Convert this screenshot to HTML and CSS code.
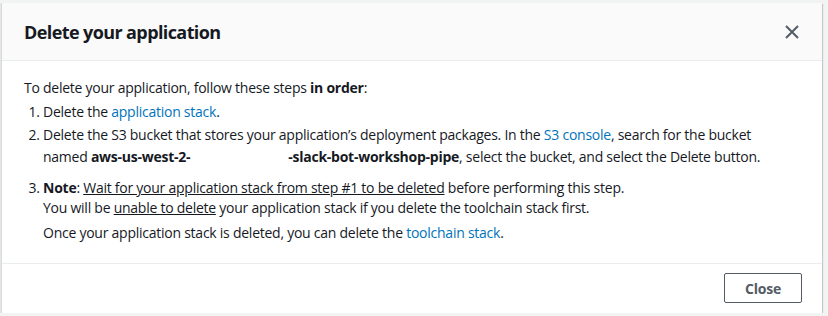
FILE: index.html
```html
<!DOCTYPE html>
<html lang="en">
<head>
  <meta charset="UTF-8" />
  <title>Delete your application</title>
  <link rel="stylesheet" href="styles.css">
</head>
<body>
  <div class="modal">
    <div class="modal-header">
      <h2>Delete your application</h2>
      <button class="dismiss" aria-label="Close">
        <svg width="14" height="14" viewBox="0 0 14 14">
          <path d="M1 1 L13 13 M13 1 L1 13" stroke="#545b64" stroke-width="2" fill="none" />
        </svg>
      </button>
    </div>

    <div class="modal-body">
      <p class="intro">To delete your application, follow these steps <b>in order</b>:</p>
      <ol class="steps">
        <li>Delete the <a href="#">application stack</a>.</li>
        <li>Delete the S3 bucket that stores your application’s deployment packages. In the <a href="#">S3 console</a>, search for the bucket named <b>aws-us-west-2-<span class="redacted"></span>-slack-bot-workshop-pipe</b>, select the bucket, and select the Delete button.</li>
        <li>
          <p class="note"><b>Note</b>: <u>Wait for your application stack from step #1 to be deleted</u> before performing this step.<br>You will be <u>unable to delete</u> your application stack if you delete the toolchain stack first.</p>
          <p class="after">Once your application stack is deleted, you can delete the <a href="#">toolchain stack</a>.</p>
        </li>
      </ol>
    </div>

    <div class="modal-footer">
      <button class="btn">Close</button>
    </div>
  </div>
</body>
</html>
```

FILE: styles.css
```css
body {
  margin: 0;
  padding: 3px 6px 0 1px;
  background: #f2f3f3;
  font-family: 'Open Sans', 'Noto Sans', sans-serif;
  font-size: 14px;
  letter-spacing: -0.25px;
  color: #16191f;
}

.modal {
  width: 820px;
  background: white;
  border-left: 1px solid #d5dbdb;
  box-shadow: 0 1px 1px rgba(0,28,36,0.3), 1px 1px 1px rgba(0,28,36,0.15);
}

.modal-header {
  background: #fafafa;
  border-bottom: 1px solid #eaeded;
  height: 57px;
  padding: 0 22px;
  display: flex;
  justify-content: space-between;
  align-items: center;
}

.modal-header h2 {
  margin: 0;
  font-size: 18px;
  font-weight: 700;
  letter-spacing: -0.6px;
}

.dismiss {
  background: none;
  border: none;
  padding: 0;
  margin-right: 1px;
  display: flex;
}

.modal-body {
  padding: 16px 40px 19px 22px;
  line-height: 22px;
}

.modal-body p { margin: 0; }

.modal-body a {
  color: #0073bb;
  text-decoration: none;
}

.steps {
  margin: 2px 0 0;
  padding-left: 19px;
}

.steps li { margin-bottom: 1px; }
.steps li:last-child { margin: 9px 0 0; }

.note { line-height: 20px; }
.after { margin-top: 4px !important; }

.redacted {
  display: inline-block;
  width: 98px;
}

.modal-footer {
  border-top: 1px solid #eaeded;
  padding: 9px 20px 10px;
  display: flex;
  justify-content: flex-end;
}

.btn {
  width: 78px;
  height: 30px;
  background: white;
  border: 1px solid #545b64;
  border-radius: 2px;
  color: #545b64;
  font-family: inherit;
  font-size: 14px;
  font-weight: 700;
  letter-spacing: -0.25px;
}
```
